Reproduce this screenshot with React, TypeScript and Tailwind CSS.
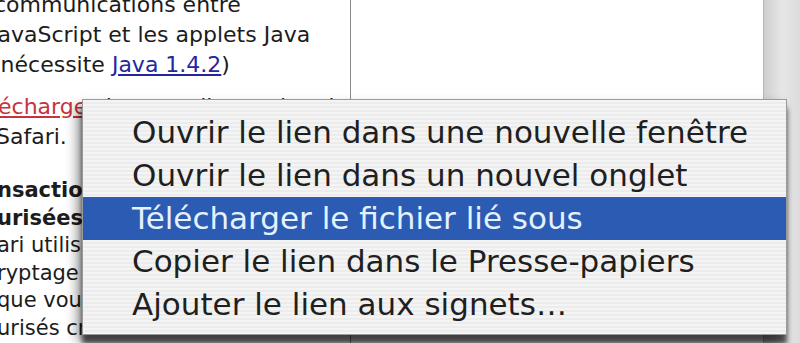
import React from 'react';

const items = [
  { label: 'Ouvrir le lien dans une nouvelle fenêtre' },
  { label: 'Ouvrir le lien dans un nouvel onglet' },
  { label: 'Télécharger le fichier lié sous', active: true },
  { label: 'Copier le lien dans le Presse-papiers' },
  { label: 'Ajouter le lien aux signets…' },
];

export default function App() {
  return (
    <div className="relative h-[343px] w-[800px] overflow-hidden bg-white font-['DejaVu_Sans',sans-serif] text-[#1c1c1c]">
      <div className="flex h-full">
        {/* Page column, scrolled to the right */}
        <div className="w-[351px] shrink-0 overflow-hidden border-r border-[#8a8a8a]">
          <div className="-mt-[10px] text-[22px] leading-[30px] whitespace-nowrap">
            <p className="-ml-[6px]">communications entre</p>
            <p className="-ml-[9px]">JavaScript et les applets Java</p>
            <p className="-ml-[8px]">
              (nécessite <a className="text-[#2626a0] underline">Java 1.4.2</a>)
            </p>
            <p className="mt-[12px] -ml-[2px]">
              <a className="text-[#c8323c] underline">échargez</a> la nouvelle version de
            </p>
            <p className="-ml-[4px]">Safari.</p>
          </div>
          <div className="mt-[25px] text-[21px] leading-[27.5px] whitespace-nowrap">
            <p className="-ml-[3px] font-bold">nsactions</p>
            <p className="-ml-[3px] font-bold">urisées</p>
            <p className="-ml-[3px]">ari utilise le</p>
            <p className="-ml-[3px]">ryptage SSL</p>
            <p className="-ml-[3px]">que vous</p>
            <p className="-ml-[3px]">urisés cr</p>
          </div>
        </div>
        <div className="flex-1" />
        {/* Window edge */}
        <div className="w-[37px] shrink-0 border-l border-[#b8b8b8] bg-gradient-to-r from-[#cfcfcf] via-[#e6e6e6] to-[#dcdcdc]" />
      </div>

      {/* Context menu */}
      <div className="absolute left-[82px] top-[99px] h-[236px] w-[705px] border border-[#9a9a9a] bg-[#f1f1f1] bg-[repeating-linear-gradient(180deg,#f4f4f4_0px,#f4f4f4_2px,#ececec_2px,#ececec_4px)] pt-[11px] shadow-[0_9px_5px_rgba(0,0,0,0.65),-6px_6px_10px_rgba(0,0,0,0.35)]">
        {items.map((item) => (
          <div
            key={item.label}
            className={`flex h-[43px] items-center pl-[49px] text-[31px] whitespace-nowrap ${
              item.active ? 'bg-[#2b5bb3] text-[#e4f1ff]' : 'text-[#1f1f1f]'
            }`}
          >
            {item.label}
          </div>
        ))}
      </div>
    </div>
  );
}
